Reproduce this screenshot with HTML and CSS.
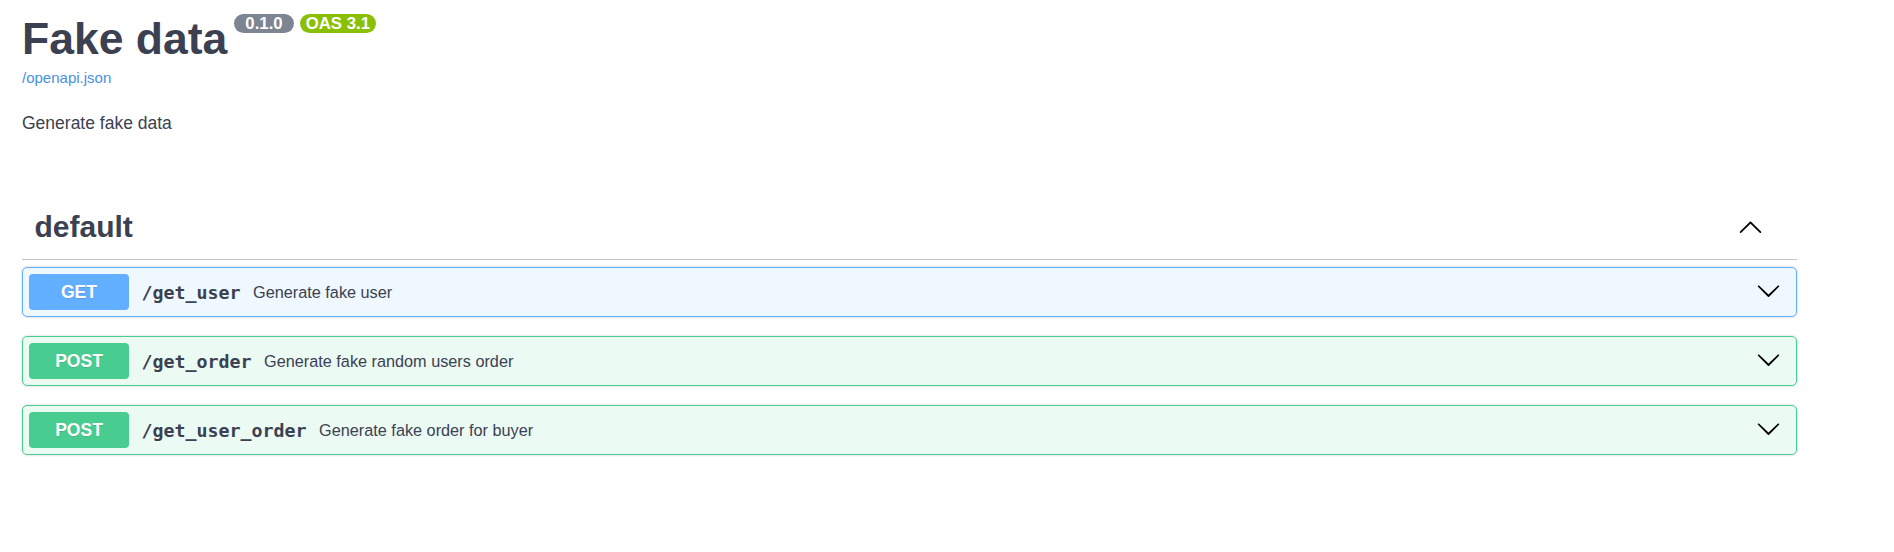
FILE: index.html
```html
<!DOCTYPE html>
<html lang="en">
<head>
<meta charset="utf-8">
<title>Fake data</title>
<link rel="stylesheet" href="styles.css">
</head>
<body>
<div class="page">
  <header class="info">
    <div class="title-row">
      <h2 class="title">Fake data</h2>
      <span class="badge badge-version">0.1.0</span>
      <span class="badge badge-oas">OAS 3.1</span>
    </div>
    <a class="spec-link" href="#">/openapi.json</a>
    <p class="info-desc">Generate fake data</p>
  </header>

  <section class="tag">
    <div class="tag-header">
      <h3 class="tag-name">default</h3>
      <span class="toggle">
        <svg class="arrow" viewBox="0 0 20 20" width="25" height="25"><path d="M17.418 14.908c.272.268.709.268.979 0s.271-.701 0-.969l-7.908-7.83c-.27-.268-.707-.268-.979 0l-7.908 7.83c-.27.268-.27.701 0 .969.271.268.709.268.979 0L10 7.751l7.418 7.157z"/></svg>
      </span>
    </div>

    <div class="opblock opblock-get">
      <span class="method method-get">GET</span>
      <span class="path">/get_user</span>
      <span class="summary">Generate fake user</span>
      <svg class="arrow arrow-down" viewBox="0 0 20 20" width="25" height="25"><path d="M17.418 6.109c.272-.268.709-.268.979 0s.271.701 0 .969l-7.908 7.83c-.27.268-.707.268-.979 0l-7.908-7.83c-.27-.268-.27-.701 0-.969.271-.268.709-.268.979 0L10 13.25l7.418-7.141z"/></svg>
    </div>

    <div class="opblock opblock-post">
      <span class="method method-post">POST</span>
      <span class="path">/get_order</span>
      <span class="summary">Generate fake random users order</span>
      <svg class="arrow arrow-down" viewBox="0 0 20 20" width="25" height="25"><path d="M17.418 6.109c.272-.268.709-.268.979 0s.271.701 0 .969l-7.908 7.83c-.27.268-.707.268-.979 0l-7.908-7.83c-.27-.268-.27-.701 0-.969.271-.268.709-.268.979 0L10 13.25l7.418-7.141z"/></svg>
    </div>

    <div class="opblock opblock-post">
      <span class="method method-post">POST</span>
      <span class="path">/get_user_order</span>
      <span class="summary">Generate fake order for buyer</span>
      <svg class="arrow arrow-down" viewBox="0 0 20 20" width="25" height="25"><path d="M17.418 6.109c.272-.268.709-.268.979 0s.271.701 0 .969l-7.908 7.83c-.27.268-.707.268-.979 0l-7.908-7.83c-.27-.268-.27-.701 0-.969.271-.268.709-.268.979 0L10 13.25l7.418-7.141z"/></svg>
    </div>
  </section>
</div>
</body>
</html>
```

FILE: styles.css
```css
html, body {
  margin: 0;
  padding: 0;
  background: #ffffff;
}

body {
  font-family: "Liberation Sans", Arial, sans-serif;
  color: #3b4151;
}

.page {
  width: 1775px;
  margin-left: 22px;
  padding-top: 13px;
}

/* ---------- info ---------- */
.title-row {
  display: flex;
  align-items: flex-start;
}

.title {
  margin: 0;
  font-size: 44.5px;
  line-height: 52px;
  font-weight: 700;
  color: #3b4151;
}

.badge {
  display: inline-block;
  margin-top: 1px;
  height: 19px;
  line-height: 19px;
  border-radius: 57px;
  color: #ffffff;
  font-weight: 700;
  font-size: 16.8px;
}

.badge-version {
  margin-left: 7px;
  padding: 0 11px;
  background: #7d8492;
}

.badge-oas {
  margin-left: 6px;
  padding: 0 6px;
  background: #89bf04;
}

.spec-link {
  display: block;
  margin-top: 4px;
  font-size: 15px;
  line-height: 18px;
  color: #4990e2;
  text-decoration: none;
}

.info-desc {
  margin: 26px 0 0;
  font-size: 17.5px;
  line-height: 21px;
  color: #3b4151;
}

/* ---------- tag ---------- */
.tag {
  margin-top: 60px;
}

.tag-header {
  display: flex;
  align-items: center;
  padding: 12.5px 25px 12.5px 12.5px;
  border-bottom: 1px solid rgba(59, 65, 81, 0.3);
  margin-bottom: 7px;
}

.tag-name {
  flex: 1 1 auto;
  margin: 0;
  font-size: 30px;
  line-height: 40px;
  font-weight: 700;
  color: #3b4151;
}

.toggle {
  display: flex;
  margin-right: 9px;
}

.arrow {
  display: block;
  fill: #000000;
}

/* ---------- operations ---------- */
.opblock {
  display: flex;
  align-items: center;
  padding: 6px;
  margin-bottom: 19px;
  border: 1px solid;
  border-radius: 5px;
  box-shadow: 0 0 3px rgba(0, 0, 0, 0.19);
}

.opblock-get {
  background: rgba(97, 175, 254, 0.1);
  border-color: #61affe;
}

.opblock-post {
  background: rgba(73, 204, 144, 0.1);
  border-color: #49cc90;
}

.method {
  flex: 0 0 auto;
  width: 100px;
  height: 36px;
  line-height: 36px;
  text-align: center;
  border-radius: 4px;
  color: #ffffff;
  font-weight: 700;
  font-size: 17.5px;
  text-shadow: 0 1px 0 rgba(0, 0, 0, 0.1);
}

.method-get {
  background: #61affe;
}

.method-post {
  background: #49cc90;
}

.path {
  flex: 0 0 auto;
  padding: 0 12.5px;
  font-family: "DejaVu Sans Mono", "Liberation Mono", monospace;
  font-weight: 700;
  font-size: 18.3px;
  color: #3b4151;
}

.summary {
  flex: 1 1 auto;
  font-size: 16.25px;
  color: #3b4151;
}

.arrow-down {
  flex: 0 0 auto;
  margin-right: 9px;
  margin-bottom: 3px;
}
```
